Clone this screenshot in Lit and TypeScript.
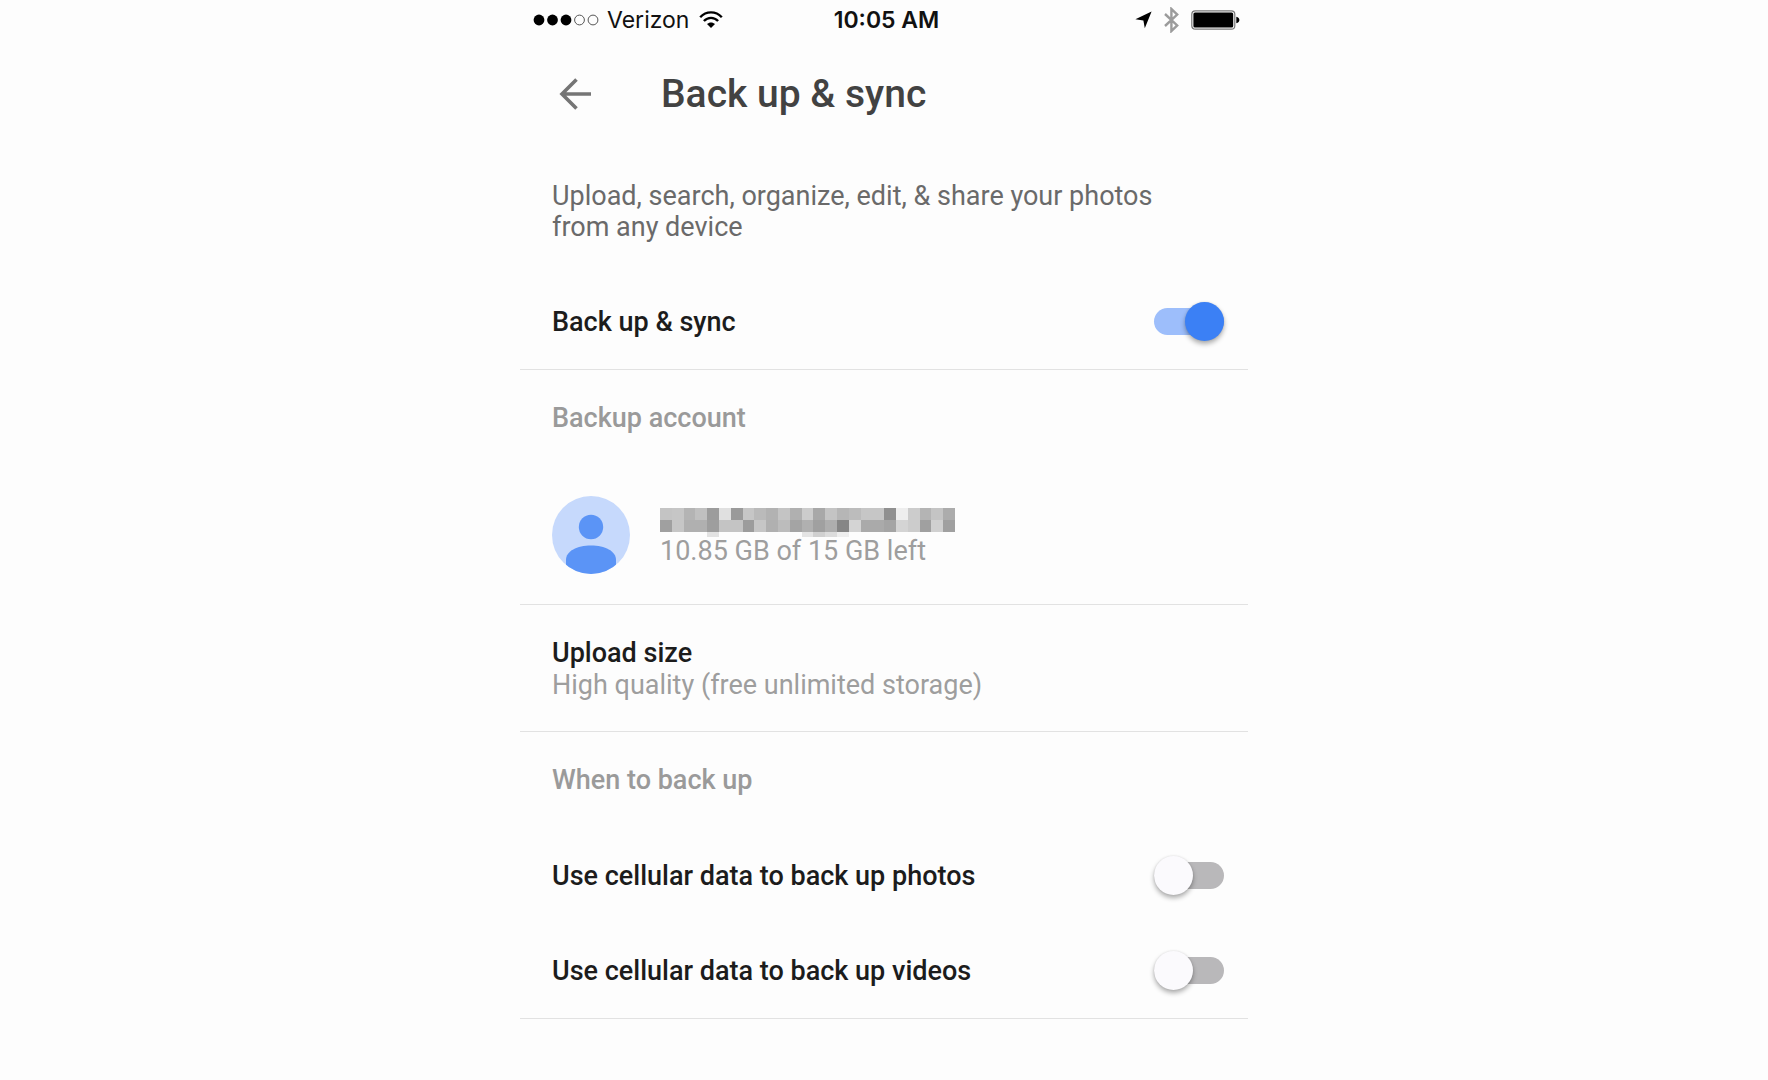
import { LitElement, html, svg, css } from "lit";
import { customElement, property, state } from "lit/decorators.js";

@customElement("toggle-row")
class ToggleRow extends LitElement {
  @property() label = "";
  @property({ type: Boolean }) on = false;

  static styles = css`
    :host {
      display: block;
    }
    .row {
      display: flex;
      align-items: center;
      justify-content: space-between;
      gap: 24px;
      min-height: 95px;
      padding: 0 24px 0 32px;
      box-sizing: border-box;
    }
    .label {
      font-size: 27px;
      line-height: 32px;
      font-weight: 500;
      color: #1c1c1c;
    }
    .switch {
      appearance: none;
      display: grid;
      align-items: center;
      flex: none;
      width: 70px;
      height: 40px;
      margin: 0;
      cursor: pointer;
    }
    .switch::before,
    .switch::after {
      content: "";
      grid-area: 1 / 1;
    }
    .switch::before {
      height: 27px;
      border-radius: 14px;
      background: #b9b8ba;
    }
    .switch::after {
      width: 39px;
      height: 39px;
      border-radius: 50%;
      background: #fbfafd;
      box-shadow: 0 3px 5px rgba(0, 0, 0, 0.32), 0 0 2px rgba(0, 0, 0, 0.1);
    }
    .switch:checked::before {
      background: #9dbefb;
    }
    .switch:checked::after {
      justify-self: end;
      background: #3b80f5;
    }
  `;

  render() {
    return html`
      <div class="row">
        <label class="label" for="switch">${this.label}</label>
        <input
          class="switch"
          id="switch"
          type="checkbox"
          role="switch"
          .checked=${this.on}
          @change=${(e: Event) => (this.on = (e.target as HTMLInputElement).checked)}
        />
      </div>
    `;
  }
}

/* Grey levels of the obscured account name, one hex pair per cell. */
const MOSAIC = [
  "c4 c6 b4 c0 9c e0 9a c6 ba b2 c4 b0 cc a8 c4 b6 bc c6 c6 90 ee cc b4 c4 ac",
  "a0 c6 b0 b0 9e c4 c4 9c c6 b0 bc a4 b0 a0 ae 86 d4 aa aa a4 d4 cc a0 d0 a0",
  "-- -- -- -- e2 -- -- -- -- -- -- -- e4 d0 dc ee -- -- -- -- -- -- -- -- --",
].map((row) => row.split(" "));

@customElement("app-root")
class AppRoot extends LitElement {
  @state() private signal = 3;

  static styles = css`
    :host {
      display: block;
      min-height: 100vh;
      background: #fdfdfd;
      font-family: Roboto, "Liberation Sans", sans-serif;
      color: #1c1c1c;
    }
    .screen {
      max-width: 728px;
      margin: 0 auto;
    }
    .status {
      display: grid;
      grid-template-columns: 1fr auto 1fr;
      align-items: center;
      height: 40px;
      padding: 0 8px 0 13px;
      font-family: Inter, "Liberation Sans", sans-serif;
      font-size: 23px;
      line-height: 28px;
      color: #111;
    }
    .carrier,
    .indicators {
      display: flex;
      align-items: center;
    }
    .carrier {
      gap: 8px;
    }
    .wifi {
      margin-left: 2px;
    }
    .indicators {
      justify-content: flex-end;
      gap: 12px;
    }
    .time {
      font-weight: 600;
    }
    .bar {
      display: flex;
      align-items: center;
      gap: 62px;
      height: 104px;
      padding: 2px 32px 0;
    }
    .back {
      display: flex;
      padding: 6px;
      margin: 0;
      border: 0;
      background: none;
      cursor: pointer;
    }
    .title {
      margin: 0;
      font-size: 39px;
      line-height: 44px;
      font-weight: 500;
      color: #424242;
    }
    .intro {
      margin: 0;
      padding: 35px 80px 31px 32px;
      font-size: 27px;
      line-height: 31px;
      color: #6a6a6a;
    }
    .group {
      border-bottom: 1px solid #e2e2e2;
    }
    .heading {
      margin: 0;
      padding: 32px;
      font-size: 27px;
      line-height: 32px;
      font-weight: 500;
      color: #9a9a9a;
    }
    .account {
      display: flex;
      align-items: center;
      gap: 30px;
      padding: 30px 32px;
    }
    .owner {
      padding-top: 6px;
    }
    .mosaic {
      display: block;
      overflow: visible;
    }
    .name {
      font-size: 27px;
      line-height: 32px;
      font-weight: 500;
      margin: 0;
    }
    .detail {
      margin: 0;
      font-size: 27px;
      line-height: 33px;
      color: #9e9e9e;
    }
    .size {
      padding: 32px 32px 29px;
    }
  `;

  render() {
    return html`
      <main class="screen">
        <div class="status">
          <div class="carrier">
            <svg width="66" height="12" viewBox="0 0 66 12" aria-hidden="true">
              ${[0, 1, 2, 3, 4].map((i) =>
                i < this.signal
                  ? svg`<circle cx=${6 + i * 13.5} cy="6" r="5.4" fill="#000" />`
                  : svg`<circle cx=${6 + i * 13.5} cy="6" r="4.9" fill="none" stroke="#555" />`
              )}
            </svg>
            <span>Verizon</span>
            <svg class="wifi" width="24" height="18" viewBox="0 0 24 18" aria-hidden="true">
              <g fill="none" stroke="#000" stroke-width="2.4">
                <path d="M1.2 6.2C7.2 -.2 16.8 -.2 22.8 6.2" />
                <path d="M4.9 10C9 5.8 15 5.8 19.1 10" />
              </g>
              <path d="M8 13.1C10.2 10.9 13.8 10.9 16 13.1L12 17Z" fill="#000" />
            </svg>
          </div>
          <time class="time">10:05 AM</time>
          <div class="indicators">
            <svg width="17" height="18" viewBox="0 0 17 18" aria-hidden="true">
              <path d="M16.6 .6L9.8 17.2L8.4 9.4L.4 8.2Z" fill="#000" />
            </svg>
            <svg width="15" height="26" viewBox="0 0 15 26" aria-hidden="true">
              <path d="M1 7L13.2 18.4L7.4 24V2L13.2 7.6L1 19" fill="none" stroke="#9b9b9b" stroke-width="2.4" />
            </svg>
            <svg width="49" height="20" viewBox="0 0 49 20" aria-hidden="true">
              <rect x=".8" y=".8" width="43" height="18.4" rx="3.5" fill="none" stroke="#777" stroke-width="1.2" />
              <rect x="2.4" y="2.4" width="39.8" height="15.2" rx="1.6" fill="#000" />
              <path d="M45.3 6.8C49.4 7.4 49.4 12.6 45.3 13.2Z" fill="#000" />
            </svg>
          </div>
        </div>

        <header class="bar">
          <button class="back" type="button" aria-label="Back">
            <svg width="35" height="32" viewBox="0 0 35 32" aria-hidden="true">
              <path d="M33 16H4M18.5 1.5L4 16L18.5 30.5" fill="none" stroke="#757575" stroke-width="3.6" />
            </svg>
          </button>
          <h1 class="title">Back up &amp; sync</h1>
        </header>

        <p class="intro">Upload, search, organize, edit, &amp; share your photos from any device</p>

        <section class="group">
          <toggle-row label="Back up &amp; sync" on></toggle-row>
        </section>

        <section class="group">
          <h2 class="heading">Backup account</h2>
          <div class="account">
            <svg width="78" height="78" viewBox="0 0 78 78" aria-hidden="true">
              <clipPath id="disc"><circle cx="39" cy="39" r="39" /></clipPath>
              <circle cx="39" cy="39" r="39" fill="#c6d9fc" />
              <g fill="#5b94f6" clip-path="url(#disc)">
                <circle cx="39" cy="31" r="12.2" />
                <path d="M14 78V64C14 55 25 49.5 39 49.5S64 55 64 64V78Z" />
              </g>
            </svg>
            <div class="owner">
              <svg class="mosaic" width="295" height="27" viewBox="0 0 295 27" shape-rendering="crispEdges" aria-hidden="true">
                ${MOSAIC.map((row, y) =>
                  row.map((v, x) =>
                    v === "--"
                      ? null
                      : svg`<rect x=${x * 11.8} y=${y * 12} width="11.8" height=${y === 2 ? 5 : 12} fill=${"#" + v + v + v} />`
                  )
                )}
              </svg>
              <p class="detail">10.85 GB of 15 GB left</p>
            </div>
          </div>
        </section>

        <section class="group size">
          <h2 class="name">Upload size</h2>
          <p class="detail">High quality (free unlimited storage)</p>
        </section>

        <section class="group">
          <h2 class="heading">When to back up</h2>
          <toggle-row label="Use cellular data to back up photos"></toggle-row>
          <toggle-row label="Use cellular data to back up videos"></toggle-row>
        </section>
      </main>
    `;
  }
}
